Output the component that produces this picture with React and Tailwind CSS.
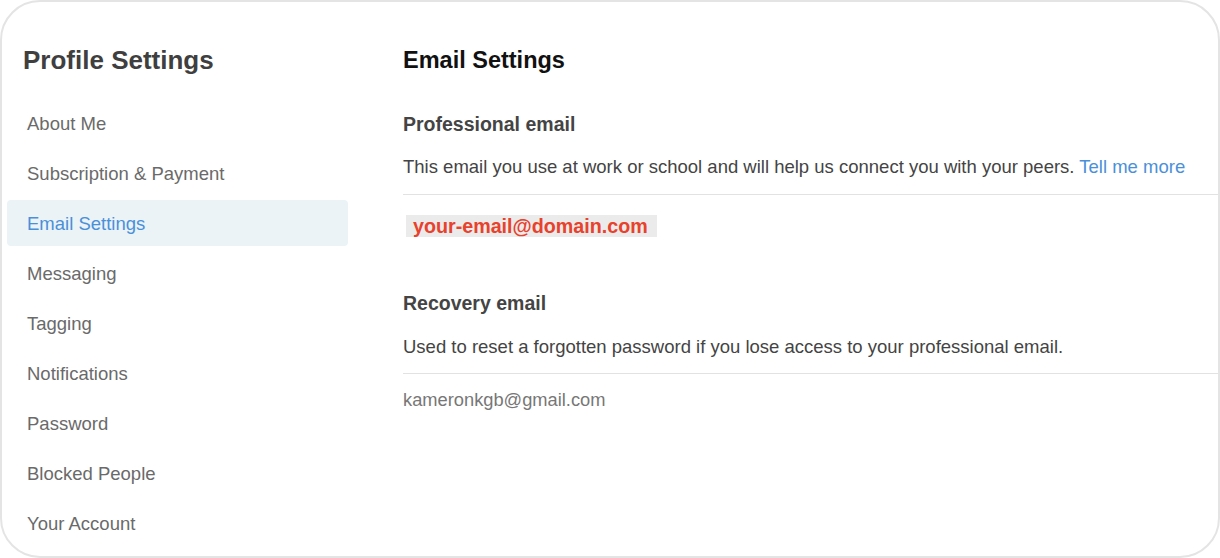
export default function App() {
  const items = [
    "About Me",
    "Subscription & Payment",
    "Email Settings",
    "Messaging",
    "Tagging",
    "Notifications",
    "Password",
    "Blocked People",
    "Your Account",
  ];
  return (
    <div className="w-[1220px] h-[558px] bg-white" style={{ fontFamily: '"Liberation Sans", Arial, Helvetica, sans-serif' }}>
      <div className="w-[1220px] h-[558px] border-2 border-[#e4e4e4] rounded-[40px] flex overflow-hidden bg-white">
        <aside className="w-[401px] shrink-0 pl-[5px] pr-[55px] pt-[42px]">
          <h1 className="pl-[16px] text-[26px] leading-[32px] font-bold text-[#3f3f3f]">Profile Settings</h1>
          <nav className="mt-[24px] flex flex-col gap-[4px]">
            {items.map((it) => (
              <div
                key={it}
                className={
                  it === "Email Settings"
                    ? "h-[46px] flex items-center pt-[2px] px-[20px] rounded-[4px] bg-[#ebf3f7] text-[#4a90d9] text-[18.5px]"
                    : "h-[46px] flex items-center pt-[2px] px-[20px] rounded-[4px] text-[#6a6a6a] text-[18.5px]"
                }
              >
                {it}
              </div>
            ))}
          </nav>
        </aside>
        <main className="flex-1 pt-[42px]">
          <h2 className="text-[23.5px] leading-[32px] font-bold text-[#111]">Email Settings</h2>
          <h3 className="mt-[36px] text-[19.5px] leading-[24px] font-bold text-[#444]">Professional email</h3>
          <p className="mt-[19px] text-[18.5px] leading-[24px] text-[#444]">
            This email you use at work or school and will help us connect you with your peers.{" "}
            <span className="text-[#4a90d9]">Tell me more</span>
          </p>
          <div className="mt-[15px] h-px bg-[#e2e2e2]"></div>
          <div className="mt-[20px] ml-[3px] w-fit h-[22px] leading-[22px] pl-[7px] pr-[9px] bg-[#ebebeb] text-[19.7px] font-bold text-[#e8412c]">
            your-email@domain.com
          </div>
          <h3 className="mt-[54px] text-[19.5px] leading-[24px] font-bold text-[#444]">Recovery email</h3>
          <p className="mt-[20px] text-[18.5px] leading-[24px] text-[#444]">
            Used to reset a forgotten password if you lose access to your professional email.
          </p>
          <div className="mt-[14px] h-px bg-[#e2e2e2]"></div>
          <p className="mt-[14px] text-[18.3px] leading-[24px] text-[#777]">kameronkgb@gmail.com</p>
        </main>
      </div>
    </div>
  );
}
